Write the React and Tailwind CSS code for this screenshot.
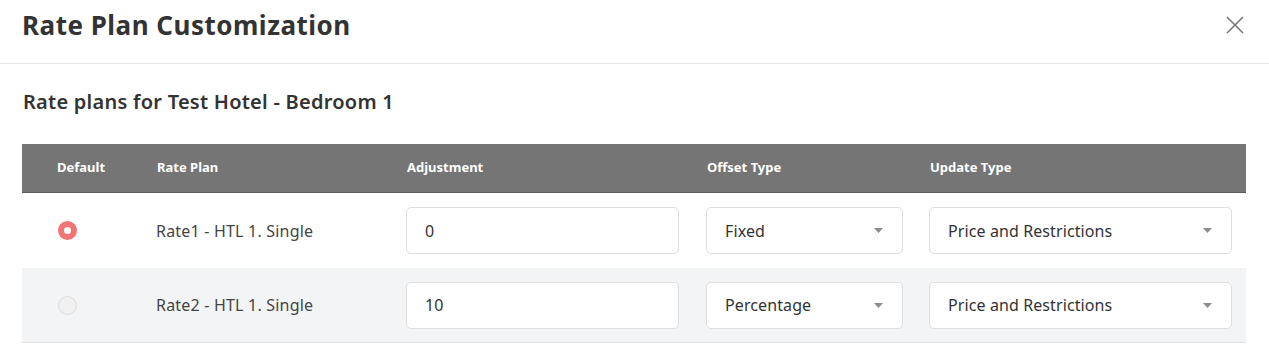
import React from "react";

const rows = [
  { name: "Rate1 - HTL 1. Single", adj: "0", offset: "Fixed", update: "Price and Restrictions", selected: true },
  { name: "Rate2 - HTL 1. Single", adj: "10", offset: "Percentage", update: "Price and Restrictions", selected: false },
];

const Caret = () => (
  <svg width="9" height="5" viewBox="0 0 9 5" className="shrink-0">
    <path d="M0 0h9L4.5 5z" fill="#8c8c8c" />
  </svg>
);

const Select = ({ value }) => (
  <div className="flex h-[47px] w-full items-center justify-between rounded-[5px] border border-[#dedede] bg-white pl-[18px] pr-[19px] text-[16px] tracking-[0.1px] text-[#333]">
    <span>{value}</span>
    <Caret />
  </div>
);

const App = () => {
  return (
    <div className="w-[1269px] h-[355px] bg-white" style={{ fontFamily: '"Noto Sans", "Open Sans", sans-serif' }}>
      <div className="flex h-[64px] items-start justify-between border-b border-[#e4e4e4] pl-[22px] pr-[25px] pt-[6px]">
        <h1 className="text-[26px] font-bold leading-[38px] tracking-[0.5px] text-[#333]">Rate Plan Customization</h1>
        <button className="mt-[10px] text-[#777]">
          <svg width="18" height="18" viewBox="0 0 18 18">
            <path d="M1 1L17 17M17 1L1 17" stroke="currentColor" strokeWidth="1.6" fill="none" />
          </svg>
        </button>
      </div>

      <div className="px-[22px]">
        <h2 className="mt-[24px] pl-[1px] text-[20px] font-semibold leading-[28px] tracking-[0.25px] text-[#333]">
          Rate plans for Test Hotel - Bedroom 1
        </h2>

        <div className="mt-[28px] w-[1224px]">
          <div className="grid h-[49px] grid-cols-[121px_249px_300px_223px_1fr] items-center border-b border-[#5c5c5c] bg-[#757575] text-[13px] font-bold text-white">
            <div className="pl-[35px]">Default</div>
            <div className="pl-[14px]">Rate Plan</div>
            <div className="pl-[15px]">Adjustment</div>
            <div className="pl-[15px]">Offset Type</div>
            <div className="pl-[15px]">Update Type</div>
          </div>

          {rows.map((r, i) => (
            <div
              key={i}
              className={`grid h-[75px] grid-cols-[121px_249px_300px_223px_1fr] items-center ${
                i === 1 ? "bg-[#f3f4f6] border-b border-[#e2e2e2]" : "bg-white"
              }`}
            >
              <div className="pl-[36px]">
                {r.selected ? (
                  <div className="h-[19px] w-[19px] rounded-full border-[6px] border-[#f27474] bg-white" />
                ) : (
                  <div className="h-[19px] w-[19px] rounded-full border border-[#dcdcdc] bg-[#f0f0f0]" />
                )}
              </div>
              <div className="pl-[13px] text-[16px] tracking-[0.2px] text-[#444]">{r.name}</div>
              <div className="pl-[14px] pr-[13px]">
                <div className="flex h-[47px] w-full items-center rounded-[5px] border border-[#dedede] bg-white pl-[18px] text-[16px] text-[#333]">
                  {r.adj}
                </div>
              </div>
              <div className="pl-[14px] pr-[12px]">
                <Select value={r.offset} />
              </div>
              <div className="pl-[14px] pr-[14px]">
                <Select value={r.update} />
              </div>
            </div>
          ))}
        </div>
      </div>
    </div>
  );
};

export default App;
